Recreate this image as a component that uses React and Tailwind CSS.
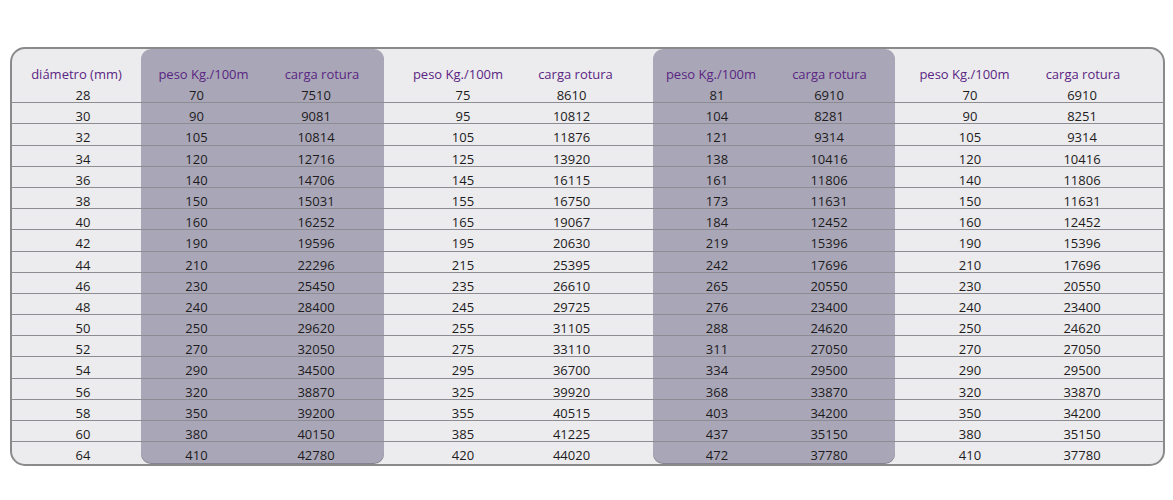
const diam = [28, 30, 32, 34, 36, 38, 40, 42, 44, 46, 48, 50, 52, 54, 56, 58, 60, 64];

const groups = [
  {
    band: true,
    peso: [70, 90, 105, 120, 140, 150, 160, 190, 210, 230, 240, 250, 270, 290, 320, 350, 380, 410],
    carga: [7510, 9081, 10814, 12716, 14706, 15031, 16252, 19596, 22296, 25450, 28400, 29620, 32050, 34500, 38870, 39200, 40150, 42780],
    cols: [
      { w: 'w-[121px]', head: 'pl-[4px]', cell: 'pr-[10px]' },
      { w: 'w-[122px]', head: 'pr-[2px]', cell: 'pr-[14px]' },
    ],
  },
  {
    band: false,
    peso: [75, 95, 105, 125, 145, 155, 165, 195, 215, 235, 245, 255, 275, 295, 325, 355, 385, 420],
    carga: [8610, 10812, 11876, 13920, 16115, 16750, 19067, 20630, 25395, 26610, 29725, 31105, 33110, 36700, 39920, 40515, 41225, 44020],
    cols: [
      { w: 'w-[134px]', head: 'pl-[14px]', cell: 'pl-[24px]' },
      { w: 'w-[135px]', head: 'pr-[20px]', cell: 'pr-[28px]' },
    ],
  },
  {
    band: true,
    peso: [81, 104, 121, 138, 161, 173, 184, 219, 242, 265, 276, 288, 311, 334, 368, 403, 437, 472],
    carga: [6910, 8281, 9314, 10416, 11806, 11631, 12452, 15396, 17696, 20550, 23400, 24620, 27050, 29500, 33870, 34200, 35150, 37780],
    cols: [
      { w: 'w-[121px]', head: 'pr-[5px]', cell: 'pl-[7px]' },
      { w: 'w-[121px]', head: 'pr-[10px]', cell: 'pr-[11px]' },
    ],
  },
  {
    band: false,
    peso: [70, 90, 105, 120, 140, 150, 160, 190, 210, 230, 240, 250, 270, 290, 320, 350, 380, 410],
    carga: [6910, 8251, 9314, 10416, 11806, 11631, 12452, 15396, 17696, 20550, 23400, 24620, 27050, 29500, 33870, 34200, 35150, 37780],
    cols: [
      { w: 'w-[134px]', head: 'pl-[5px]', cell: 'pl-[16px]' },
      { w: 'w-[134px]', head: 'pr-[26px]', cell: 'pr-[28px]' },
    ],
  },
];

function Column({ title, values, w, head, cell }) {
  return (
    <div className={`flex flex-col ${w}`}>
      <div className={`h-[33px] pt-[18px] text-center text-[13px] leading-[14px] text-[#5a2583] ${head}`}>
        {title}
      </div>
      {values.map((v, i) => (
        <div
          key={i}
          className={`h-[21.2px] pt-[6px] text-center text-[13px] leading-[14px] text-[#1d1b1c] ${cell} ${
            i < values.length - 1 ? 'border-b border-[#8d8c92]' : ''
          }`}
        >
          {v}
        </div>
      ))}
    </div>
  );
}

export default function App() {
  return (
    <div className="min-h-[500px] bg-white pt-[47px] pl-[10px]" style={{ fontFamily: '"Open Sans", "Liberation Sans", sans-serif' }}>
      <div className="flex w-[1155px] rounded-[15px] border-2 border-[#8a8a8c] bg-[#ececee] pb-[1px]">
        <Column title="diámetro (mm)" values={diam} w="w-[129px]" head="" cell="pl-[13px]" />
        {groups.map((g, gi) => (
          <div
            key={gi}
            className={`flex ${g.band ? 'rounded-[10px] bg-[#a9a7b7] shadow-[0_1px_0_#85838f]' : ''}`}
          >
            <Column title="peso Kg./100m" values={g.peso} {...g.cols[0]} />
            <Column title="carga rotura" values={g.carga} {...g.cols[1]} />
          </div>
        ))}
      </div>
    </div>
  );
}
